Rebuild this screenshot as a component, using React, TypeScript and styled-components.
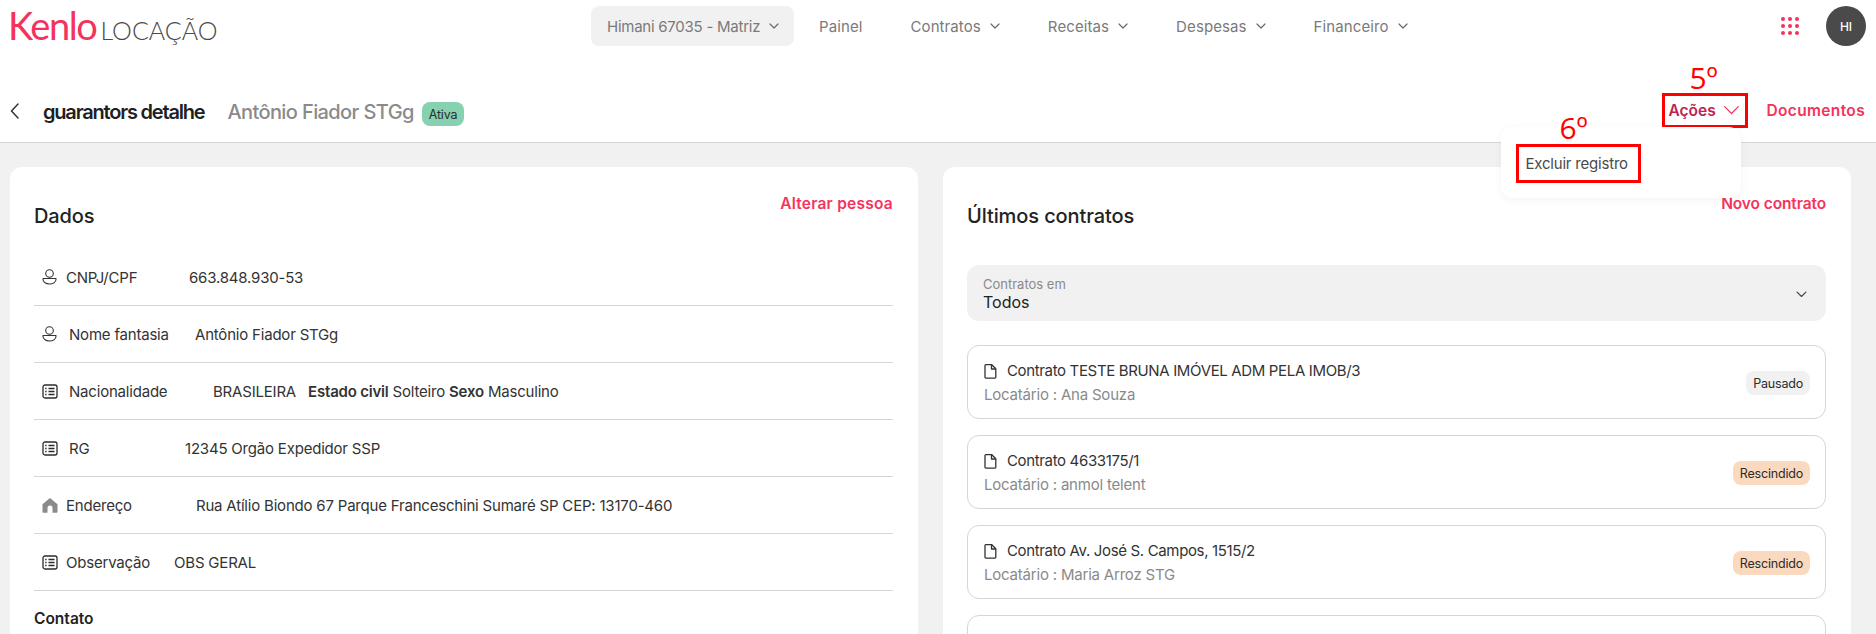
import React from "react";
import styled, { createGlobalStyle } from "styled-components";

const GlobalStyle = createGlobalStyle`
  html, body {
    margin: 0;
    height: 634px;
    overflow: hidden;
    background: #f1f1f1;
    font-family: Inter, "Noto Sans", sans-serif;
    color: #2b2b2b;
  }
  * { box-sizing: border-box; }
`;

const Page = styled.div`
  width: 1876px;
  height: 634px;
  overflow: hidden;
`;

const TopBar = styled.header`
  display: flex;
  align-items: flex-start;
  height: 57px;
  padding: 6px 10px 0;
  background: #fff;
`;

const Logo = styled.div`
  display: flex;
  align-items: baseline;
  width: 581px;
  height: 40px;
  margin-top: -1px;
  gap: 4px;
  font-family: Lato, sans-serif;
  line-height: 40px;
`;

const LogoMark = styled.span`
  margin-left: -2px;
  font-size: 38px;
  font-weight: 400;
  letter-spacing: -1.4px;
  color: #f5325b;
`;

const LogoName = styled.span`
  font-size: 25px;
  font-weight: 300;
  color: #4a4a4a;
`;

const Nav = styled.nav`
  display: flex;
  align-items: center;
  height: 40px;
  gap: 48px;
`;

const NavItem = styled.span<{ $pill?: boolean }>`
  display: flex;
  align-items: center;
  gap: 9px;
  height: 40px;
  font-size: 15px;
  letter-spacing: 0.1px;
  color: #7a7a7a;
  white-space: nowrap;
  ${(p) =>
    p.$pill &&
    `
    width: 203px;
    margin-right: -23px;
    padding-left: 16px;
    letter-spacing: -0.25px;
    background: #f1f1f1;
    border-radius: 8px;
  `}
`;

const TopRight = styled.div`
  display: flex;
  align-items: center;
  gap: 27px;
  height: 40px;
  margin-left: auto;
`;

const Avatar = styled.div`
  display: flex;
  align-items: center;
  justify-content: center;
  width: 40px;
  height: 40px;
  border-radius: 50%;
  background: #4a4a4a;
  color: #fff;
  font-size: 12px;
  font-weight: 500;
`;

const SubBar = styled.div`
  display: flex;
  align-items: center;
  height: 86px;
  padding: 22px 11px 0 10px;
  background: #fff;
  border-bottom: 1px solid #d6d6d6;
`;

const BackLink = styled.span`
  display: flex;
  width: 33px;
`;

const PageTitle = styled.h1`
  margin: 2px 0 0;
  font-size: 20px;
  font-weight: 600;
  letter-spacing: -1.2px;
  color: #1f1f1f;
`;

const PersonName = styled.span`
  margin: 2px 0 0 23px;
  font-size: 20px;
  font-weight: 500;
  letter-spacing: -0.6px;
  color: #8a8a8a;
`;

const Chip = styled.span<{ $bg: string }>`
  display: inline-flex;
  align-items: center;
  flex: none;
  height: 24px;
  padding: 0 7px;
  border-radius: 8px;
  background: ${(p) => p.$bg};
  font-size: 12.5px;
  letter-spacing: -0.2px;
  color: #2b2b2b;
`;

const StatusSlot = styled.span`
  display: flex;
  margin: 7px 0 0 8px;
`;

const SubActions = styled.div`
  display: flex;
  align-items: center;
  gap: 18px;
  margin-left: auto;
`;

const ActionsButton = styled.div`
  position: relative;
  display: flex;
  align-items: center;
  justify-content: space-between;
  width: 86px;
  height: 35px;
  padding: 0 5px 0 3px;
  border: 3px solid #ff0000;
  font-size: 15.5px;
  font-weight: 600;
  letter-spacing: 0;
  color: #bd2450;
`;

const LinkText = styled.span<{ $spacing?: number }>`
  font-size: 15.5px;
  font-weight: 600;
  letter-spacing: ${(p) => p.$spacing ?? -0.1}px;
  color: #f5325b;
  white-space: nowrap;
`;

const StepMark = styled.span<{ $top: number; $left: number }>`
  position: absolute;
  top: ${(p) => p.$top}px;
  left: ${(p) => p.$left}px;
  font-family: "Open Sans", sans-serif;
  font-size: 30px;
  line-height: 32px;
  font-weight: 400;
  color: #ff0000;
`;

const Popover = styled.div`
  position: absolute;
  top: 31px;
  right: 4px;
  width: 240px;
  height: 71px;
  padding: 17px 15px;
  background: #fff;
  border-radius: 12px;
  box-shadow: 0 2px 10px rgba(0, 0, 0, 0.05);
`;

const MenuItem = styled.div`
  display: flex;
  align-items: center;
  width: 125px;
  height: 39px;
  padding-left: 6px;
  border: 3px solid #ff0000;
  font-size: 15px;
  font-weight: 400;
  letter-spacing: -0.2px;
  color: #4a4a4a;
  white-space: nowrap;
`;

const Main = styled.main`
  display: grid;
  grid-template-columns: 1fr 1fr;
  gap: 25px;
  padding: 24px 25px 0 10px;
`;

const Card = styled.section`
  height: 520px;
  padding: 24px 25px 0 24px;
  background: #fff;
  border-radius: 12px;
`;

const CardHead = styled.div<{ $height: number }>`
  display: flex;
  align-items: flex-start;
  justify-content: space-between;
  height: ${(p) => p.$height}px;
  line-height: 26px;
`;

const CardTitle = styled.h2`
  margin: 11px 0 0;
  font-size: 20px;
  line-height: 28px;
  font-weight: 500;
  letter-spacing: -0.1px;
  color: #222;
`;

const DataRow = styled.div`
  display: flex;
  align-items: center;
  height: 57px;
  padding-left: 8px;
  border-bottom: 1px solid #d6d6d6;
  font-size: 15px;
  letter-spacing: -0.2px;
  color: #333;
`;

const IconSlot = styled.span`
  display: flex;
  flex: none;
  width: 16px;
`;

const RowLabel = styled.span<{ $offset: number; $width: number }>`
  flex: none;
  width: ${(p) => p.$width}px;
  margin-left: ${(p) => p.$offset}px;
  white-space: nowrap;
`;

const RowValue = styled.span`
  white-space: nowrap;
  strong {
    font-weight: 600;
  }
`;

const SectionLabel = styled.h3`
  margin: 16px 0 0;
  font-size: 15.5px;
  line-height: 24px;
  font-weight: 600;
  letter-spacing: 0;
  color: #222;
`;

const SelectBox = styled.div`
  display: flex;
  align-items: center;
  justify-content: space-between;
  height: 56px;
  padding: 2px 19px 0 16px;
  margin-bottom: 24px;
  background: #f1f1f1;
  border-radius: 12px;
`;

const SelectLabel = styled.div`
  font-size: 13px;
  line-height: 16px;
  letter-spacing: 0;
  color: #8a8a8a;
`;

const SelectValue = styled.div`
  font-size: 16px;
  line-height: 20px;
  color: #222;
`;

const ContractList = styled.div`
  display: flex;
  flex-direction: column;
  gap: 16px;
`;

const ContractCard = styled.div`
  display: flex;
  align-items: center;
  justify-content: space-between;
  flex: none;
  height: 74px;
  padding: 2px 15px 0 16px;
  border: 1px solid #d6d6d6;
  border-radius: 12px;
`;

const ContractTitle = styled.div`
  display: flex;
  align-items: center;
  gap: 10px;
  font-size: 15px;
  line-height: 24px;
  letter-spacing: -0.35px;
  color: #333;
`;

const ContractTenant = styled.div`
  font-size: 15px;
  line-height: 24px;
  letter-spacing: -0.2px;
  color: #8a8a8a;
`;

const Chevron = ({ size = 12, color = "#6a6a6a", width = 1.5 }: { size?: number; color?: string; width?: number }) => (
  <svg width={size} height={size * 0.6} viewBox="0 0 20 12" fill="none">
    <path d="M2 2l8 8 8-8" stroke={color} strokeWidth={width * (20 / size)} strokeLinecap="round" strokeLinejoin="round" />
  </svg>
);

const BackIcon = () => (
  <svg width="9" height="16" viewBox="0 0 9 16" fill="none">
    <path d="M8 1L1.5 8 8 15" stroke="#333" strokeWidth="1.5" strokeLinecap="round" strokeLinejoin="round" />
  </svg>
);

const GridIcon = () => (
  <svg width="18" height="18" viewBox="0 0 18 18" fill="#f5325b">
    {[2, 9, 16].map((y) => [2, 9, 16].map((x) => <circle key={`${x}-${y}`} cx={x} cy={y} r="2" />))}
  </svg>
);

const PersonIcon = () => (
  <svg width="15" height="16" viewBox="0 0 15 16" fill="none" stroke="#333" strokeWidth="1.1">
    <circle cx="7.5" cy="4.5" r="3.8" />
    <path d="M1 9.5h13v.8c0 3-3 4.700-6.500 4.700S1 13.300 1 10.300z" strokeLinejoin="round" />
  </svg>
);

const ListIcon = () => (
  <svg width="16" height="15" viewBox="0 0 16 15" fill="none" stroke="#2b2b2b" strokeWidth="1.3">
    <rect x="1" y="1" width="14" height="13" rx="2" />
    <path d="M6.500 4.500h6M6.500 7.500h6M6.500 10.500h6" />
    <path d="M3.200 4.500h1.400M3.200 7.500h1.400M3.200 10.500h1.400" />
  </svg>
);

const HomeIcon = () => (
  <svg width="16" height="16" viewBox="0 0 16 16" fill="#8a8a8a">
    <path d="M8 1L0.500 7.200V15a.8.8 0 0 0 .8.8H5.500V11a2.500 2.500 0 0 1 5 0v4.800h4.200a.8.8 0 0 0 .8-.8V7.200z" />
  </svg>
);

const FileIcon = () => (
  <svg width="13" height="15" viewBox="0 0 13 15" fill="none" stroke="#333" strokeWidth="1.300">
    <path d="M1 1.500a.8.8 0 0 1 .8-.8h6l4 4v8.600a.8.8 0 0 1-.8.8H1.800a.8.8 0 0 1-.8-.8z" strokeLinejoin="round" />
    <path d="M7.500 .7v4.300h4.300" strokeLinejoin="round" />
  </svg>
);

const dataRows = [
  { icon: <PersonIcon />, label: "CNPJ/CPF", offset: 8, width: 123, value: <>663.848.930-53</> },
  { icon: <PersonIcon />, label: "Nome fantasia", offset: 11, width: 126, value: <>Antônio Fiador STGg</> },
  {
    icon: <ListIcon />,
    label: "Nacionalidade",
    offset: 11,
    width: 144,
    value: (
      <>
        BRASILEIRA&nbsp;&nbsp; <strong>Estado civil</strong> Solteiro <strong>Sexo</strong> Masculino
      </>
    ),
  },
  { icon: <ListIcon />, label: "RG", offset: 11, width: 116, value: <>12345 Orgão Expedidor SSP</> },
  {
    icon: <HomeIcon />,
    label: "Endereço",
    offset: 8,
    width: 130,
    value: <>Rua Atílio Biondo 67 Parque Franceschini Sumaré SP CEP: 13170-460</>,
  },
  { icon: <ListIcon />, label: "Observação", offset: 8, width: 108, value: <>OBS GERAL</> },
];

const contracts = [
  { title: "Contrato TESTE BRUNA IMÓVEL ADM PELA IMOB/3", tenant: "Locatário : Ana Souza", status: "Pausado", bg: "#f1f1f1" },
  { title: "Contrato 4633175/1", tenant: "Locatário : anmol telent", status: "Rescindido", bg: "#fad9bf" },
  { title: "Contrato Av. José S. Campos, 1515/2", tenant: "Locatário : Maria Arroz STG", status: "Rescindido", bg: "#fad9bf" },
];

const App: React.FC = () => {
  return (
    <Page>
      <GlobalStyle />
      <TopBar>
        <Logo>
          <LogoMark>Kenlo</LogoMark>
          <LogoName>LOCAÇÃO</LogoName>
        </Logo>
        <Nav>
          <NavItem $pill>
            Himani 67035 - Matriz <Chevron size={10} width={1.2} />
          </NavItem>
          <NavItem>Painel</NavItem>
          <NavItem>
            Contratos <Chevron size={10} width={1.2} />
          </NavItem>
          <NavItem>
            Receitas <Chevron size={10} width={1.2} />
          </NavItem>
          <NavItem>
            Despesas <Chevron size={10} width={1.2} />
          </NavItem>
          <NavItem>
            Financeiro <Chevron size={10} width={1.2} />
          </NavItem>
        </Nav>
        <TopRight>
          <GridIcon />
          <Avatar>HI</Avatar>
        </TopRight>
      </TopBar>

      <SubBar>
        <BackLink>
          <BackIcon />
        </BackLink>
        <PageTitle>guarantors detalhe</PageTitle>
        <PersonName>Antônio Fiador STGg</PersonName>
        <StatusSlot>
          <Chip $bg="#86d1b0">Ativa</Chip>
        </StatusSlot>
        <SubActions>
          <ActionsButton>
            Ações <Chevron size={17} color="#f5325b" width={1.2} />
            <StepMark $top={-34} $left={24}>
              5º
            </StepMark>
            <Popover>
              <StepMark $top={-15} $left={58}>
                6º
              </StepMark>
              <MenuItem>Excluir registro</MenuItem>
            </Popover>
          </ActionsButton>
          <LinkText $spacing={0.35}>Documentos</LinkText>
        </SubActions>
      </SubBar>

      <Main>
        <Card>
          <CardHead $height={58}>
            <CardTitle>Dados</CardTitle>
            <LinkText $spacing={0.25}>Alterar pessoa</LinkText>
          </CardHead>
          {dataRows.map((row) => (
            <DataRow key={row.label}>
              <IconSlot>{row.icon}</IconSlot>
              <RowLabel $offset={row.offset} $width={row.width}>
                {row.label}
              </RowLabel>
              <RowValue>{row.value}</RowValue>
            </DataRow>
          ))}
          <SectionLabel>Contato</SectionLabel>
        </Card>

        <Card>
          <CardHead $height={74}>
            <CardTitle>Últimos contratos</CardTitle>
            <LinkText>Novo contrato</LinkText>
          </CardHead>
          <SelectBox>
            <div>
              <SelectLabel>Contratos em</SelectLabel>
              <SelectValue>Todos</SelectValue>
            </div>
            <Chevron size={11} color="#4a4a4a" width={1.3} />
          </SelectBox>
          <ContractList>
            {contracts.map((c) => (
              <ContractCard key={c.title}>
                <div>
                  <ContractTitle>
                    <FileIcon />
                    {c.title}
                  </ContractTitle>
                  <ContractTenant>{c.tenant}</ContractTenant>
                </div>
                <Chip $bg={c.bg}>{c.status}</Chip>
              </ContractCard>
            ))}
            <ContractCard />
          </ContractList>
        </Card>
      </Main>
    </Page>
  );
};

export default App;
